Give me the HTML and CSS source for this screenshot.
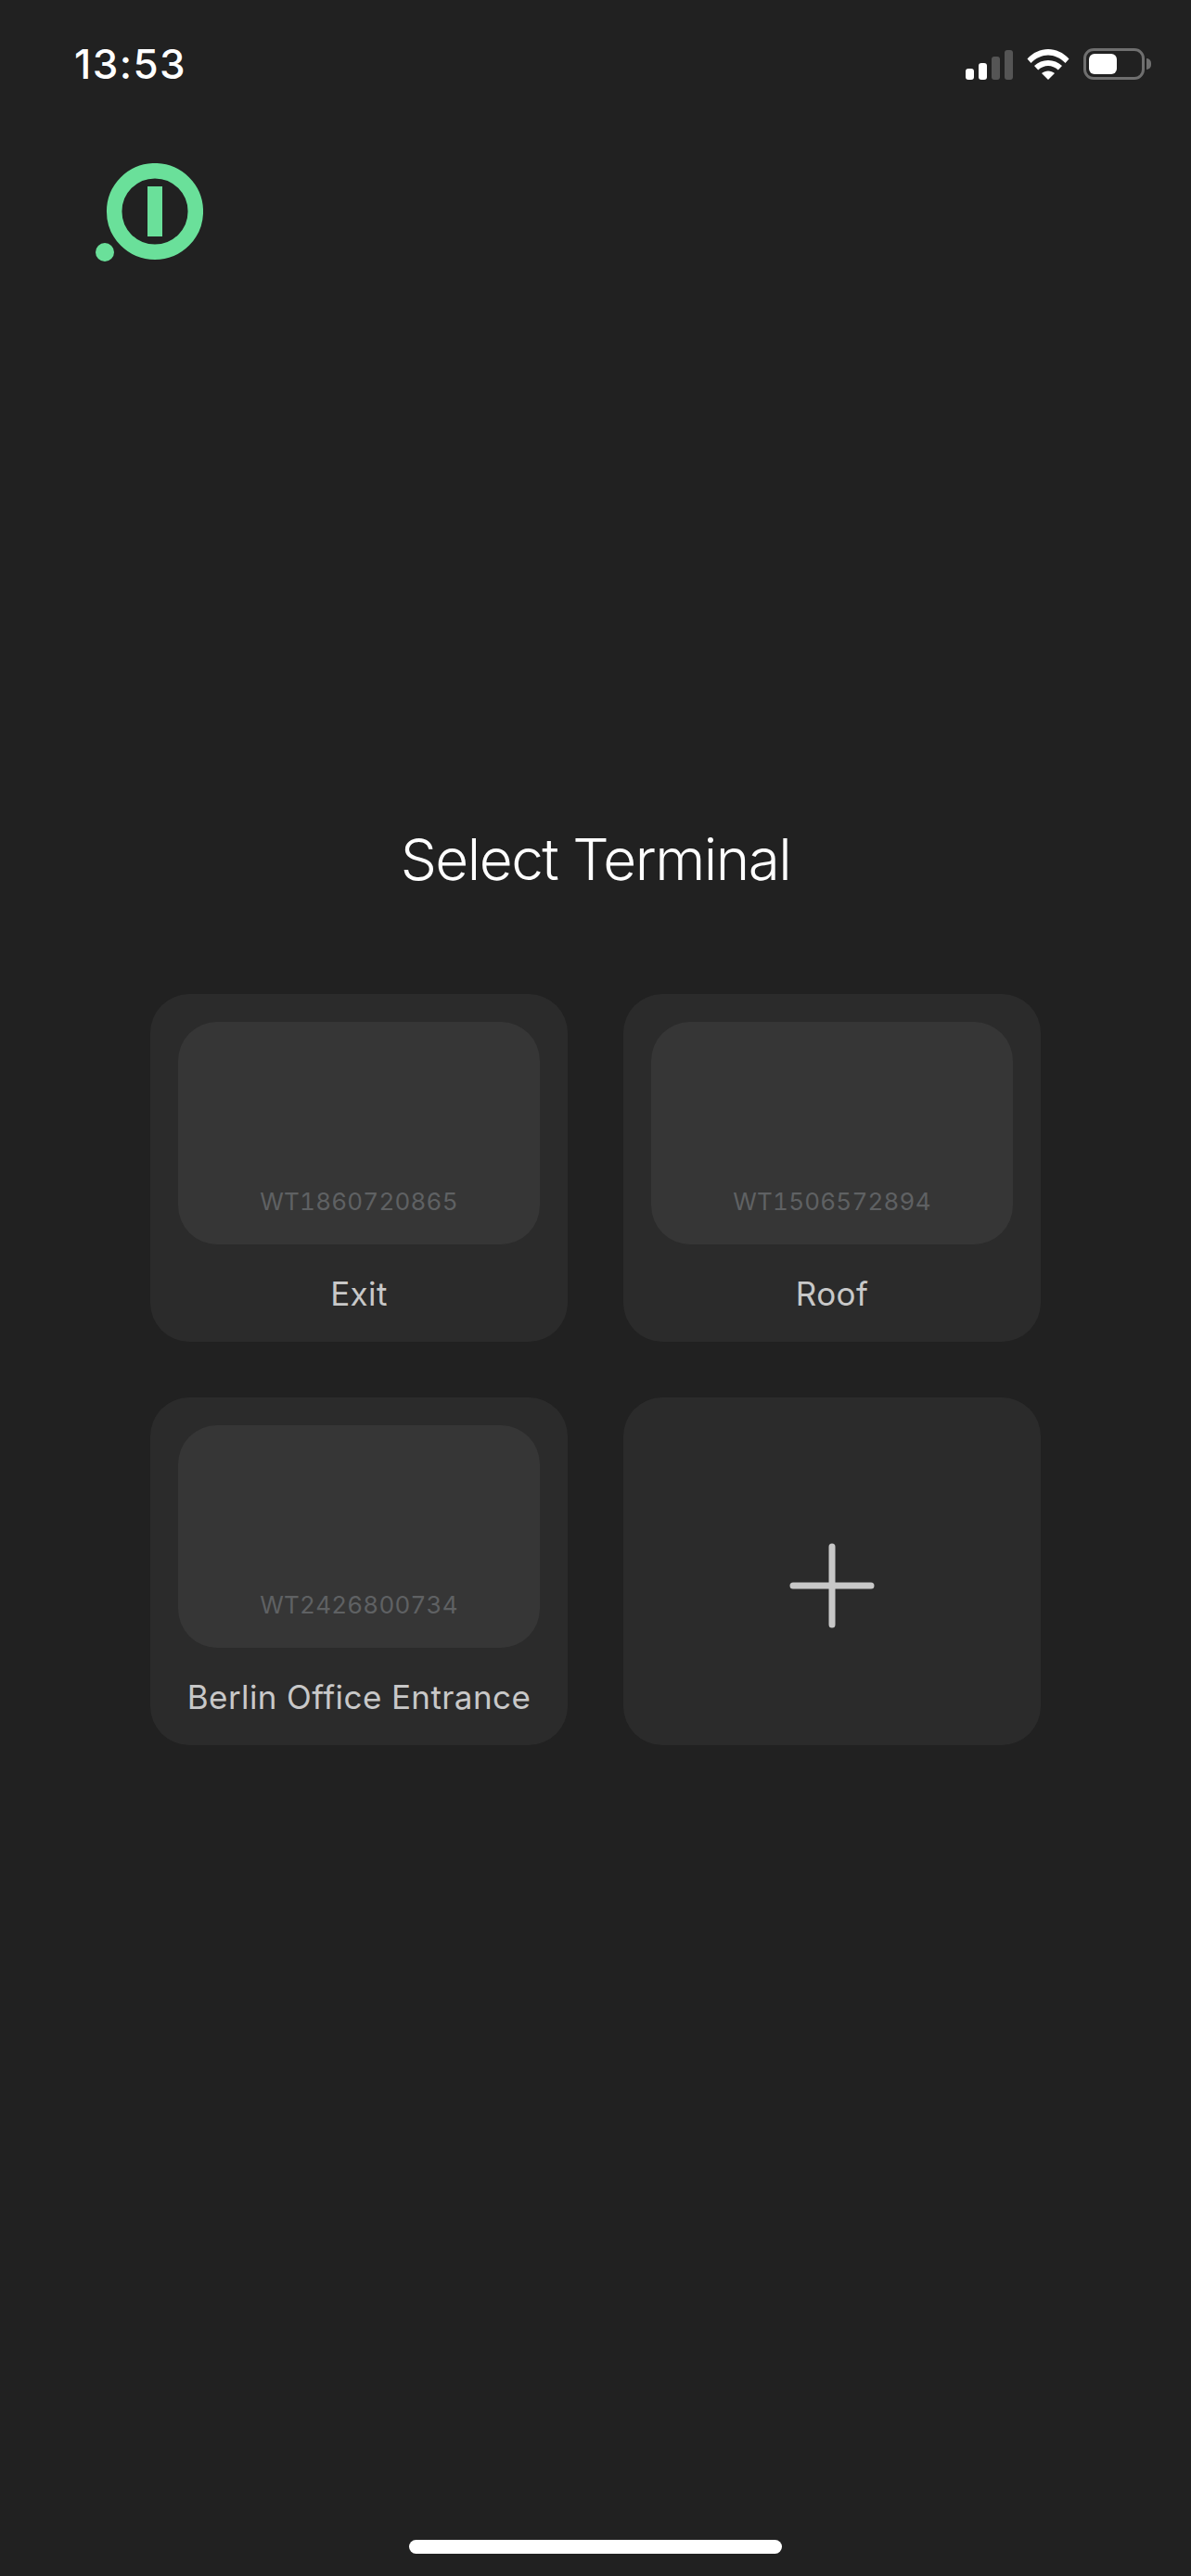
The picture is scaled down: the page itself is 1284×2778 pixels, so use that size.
FILE: index.html
```html
<!DOCTYPE html>
<html lang="en">
<head>
    <meta charset="UTF-8">
    <meta name="viewport" content="width=device-width, initial-scale=1.0">
    <title>Select Terminal</title>
    <link rel="stylesheet" href="styles.css">
</head>
<body>
    <div class="screen">
        <div class="status-bar">
            <span class="time">13:53</span>
            <div class="status-icons">
                <div class="signal">
                    <span class="bar bar-1"></span>
                    <span class="bar bar-2"></span>
                    <span class="bar bar-3 off"></span>
                    <span class="bar bar-4 off"></span>
                </div>
                <svg class="wifi" width="46" height="33" viewBox="0 0 46 33">
                    <path fill="#fff" d="M0.5 10.5C13 -3.5 33 -3.5 45.5 10.5L41.5 15C30.5 3.5 15.5 3.5 4.5 15Z"/>
                    <path fill="#fff" d="M8 18C16 10 30 10 38 18L33.8 22.6C27.5 16.6 18.5 16.6 12.2 22.6Z"/>
                    <path fill="#fff" d="M16 26C20 22.6 26 22.6 30 26L23 33Z"/>
                </svg>
                <div class="battery">
                    <div class="battery-body"><div class="battery-level"></div></div>
                    <div class="battery-tip"></div>
                </div>
            </div>
        </div>

        <svg class="logo" width="116" height="116" viewBox="0 0 116 116">
            <circle cx="64" cy="52" r="43.8" fill="none" stroke="#6ae09a" stroke-width="16.5"/>
            <rect x="56" y="25" width="16" height="54" fill="#6ae09a"/>
            <circle cx="10" cy="96" r="10" fill="#6ae09a"/>
        </svg>

        <h1 class="title">Select Terminal</h1>

        <div class="terminal-grid">
            <div class="terminal-card">
                <div class="terminal-preview"><span class="terminal-id">WT1860720865</span></div>
                <div class="terminal-name">Exit</div>
            </div>
            <div class="terminal-card">
                <div class="terminal-preview"><span class="terminal-id">WT1506572894</span></div>
                <div class="terminal-name">Roof</div>
            </div>
            <div class="terminal-card">
                <div class="terminal-preview"><span class="terminal-id">WT2426800734</span></div>
                <div class="terminal-name">Berlin Office Entrance</div>
            </div>
            <div class="terminal-card add-card">
                <svg width="92" height="92" viewBox="0 0 92 92">
                    <path d="M46 4V88M4 46H88" stroke="#c8c8c8" stroke-width="7" stroke-linecap="round" fill="none"/>
                </svg>
            </div>
        </div>

        <div class="home-indicator"></div>
    </div>
</body>
</html>
```

FILE: styles.css
```css
* {
    box-sizing: border-box;
}
body {
    font-family: 'Inter', 'Liberation Sans', sans-serif;
    margin: 0;
    padding: 0;
    background-color: #212121;
}
.screen {
    width: 1284px;
    height: 2778px;
    display: flex;
    flex-direction: column;
    overflow: hidden;
}
.status-bar {
    display: flex;
    justify-content: space-between;
    align-items: center;
    height: 34px;
    margin-top: 52px;
    padding: 0 43px 0 80px;
}
.time {
    font-size: 44px;
    font-weight: 550;
    line-height: 34px;
    letter-spacing: 1.4px;
    color: #fff;
}
.status-icons {
    display: flex;
    align-items: center;
}
.signal {
    display: flex;
    align-items: flex-end;
    gap: 5px;
    height: 33px;
    margin-right: 15px;
}
.bar {
    width: 9px;
    border-radius: 3px;
    background-color: #fff;
}
.bar.off {
    background-color: #555;
}
.bar-1 { height: 12px; }
.bar-2 { height: 18px; }
.bar-3 { height: 25px; }
.bar-4 { height: 32px; }
.wifi {
    margin-right: 15px;
}
.battery {
    display: flex;
    align-items: center;
}
.battery-body {
    width: 66px;
    height: 34px;
    padding: 3px;
    border: 3px solid #6f6f6f;
    border-radius: 11px;
}
.battery-level {
    width: 30px;
    height: 100%;
    border-radius: 6px;
    background-color: #fff;
}
.battery-tip {
    width: 5px;
    height: 12px;
    margin-left: 2px;
    border-radius: 0 6px 6px 0;
    background-color: #6f6f6f;
}
.logo {
    display: block;
    margin: 90px 0 0 103px;
    flex-shrink: 0;
}
.title {
    margin: 595px 0 0;
    font-size: 62px;
    font-weight: 300;
    line-height: 80px;
    letter-spacing: -1.5px;
    text-align: center;
    color: #fff;
}
.terminal-grid {
    display: grid;
    grid-template-columns: 450px 450px;
    grid-auto-rows: 375px;
    gap: 60px;
    margin: 105px 0 0 162px;
}
.terminal-card {
    display: flex;
    flex-direction: column;
    padding: 30px;
    border-radius: 42px;
    background-color: #2b2b2b;
}
.terminal-preview {
    display: flex;
    align-items: flex-end;
    justify-content: center;
    height: 241px;
    padding-bottom: 30px;
    border-radius: 42px;
    background-color: #363636;
}
.terminal-id {
    font-size: 26px;
    font-variant-numeric: tabular-nums;
    line-height: 32px;
    letter-spacing: 0.2px;
    color: #5f6163;
}
.terminal-name {
    margin-top: 31px;
    font-size: 35px;
    line-height: 44px;
    letter-spacing: 0.4px;
    text-align: center;
    white-space: nowrap;
    color: #c8c8c8;
}
.add-card {
    align-items: center;
    justify-content: center;
    padding-top: 60px;
}
.home-indicator {
    width: 402px;
    height: 15px;
    margin: auto auto 24px;
    border-radius: 8px;
    background-color: #fff;
}
```
